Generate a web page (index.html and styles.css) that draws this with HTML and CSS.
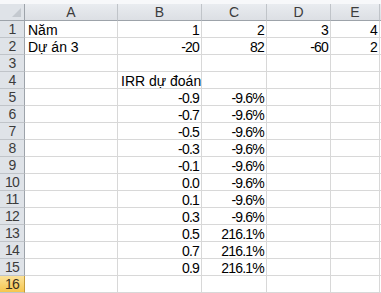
FILE: index.html
```html
<!DOCTYPE html>
<html lang="vi">
<head>
<meta charset="utf-8">
<title>Sheet1</title>
<link rel="stylesheet" href="styles.css">
</head>
<body>
<div class="toolbar-edge"></div>
<div class="sheet">
  <div class="corner"><span class="corner-tri"></span></div>
  <div class="colhead">A</div>
  <div class="colhead">B</div>
  <div class="colhead">C</div>
  <div class="colhead">D</div>
  <div class="colhead">E</div>
  <div class="colhead colhead-rest"></div>

  <div class="rowhead">1</div>
  <div class="cell">Năm</div>
  <div class="cell num">1</div>
  <div class="cell num">2</div>
  <div class="cell num">3</div>
  <div class="cell num">4</div>
  <div class="cell rest"></div>

  <div class="rowhead">2</div>
  <div class="cell">Dự án 3</div>
  <div class="cell num">-20</div>
  <div class="cell num">82</div>
  <div class="cell num">-60</div>
  <div class="cell num">2</div>
  <div class="cell rest"></div>

  <div class="rowhead">3</div>
  <div class="cell"></div><div class="cell"></div><div class="cell"></div><div class="cell"></div><div class="cell"></div><div class="cell rest"></div>

  <div class="rowhead">4</div>
  <div class="cell"></div>
  <div class="cell">IRR dự đoán</div>
  <div class="cell"></div><div class="cell"></div><div class="cell"></div><div class="cell rest"></div>

  <div class="rowhead">5</div>
  <div class="cell"></div><div class="cell num">-0.9</div><div class="cell num">-9.6%</div><div class="cell"></div><div class="cell"></div><div class="cell rest"></div>
  <div class="rowhead">6</div>
  <div class="cell"></div><div class="cell num">-0.7</div><div class="cell num">-9.6%</div><div class="cell"></div><div class="cell"></div><div class="cell rest"></div>
  <div class="rowhead">7</div>
  <div class="cell"></div><div class="cell num">-0.5</div><div class="cell num">-9.6%</div><div class="cell"></div><div class="cell"></div><div class="cell rest"></div>
  <div class="rowhead">8</div>
  <div class="cell"></div><div class="cell num">-0.3</div><div class="cell num">-9.6%</div><div class="cell"></div><div class="cell"></div><div class="cell rest"></div>
  <div class="rowhead">9</div>
  <div class="cell"></div><div class="cell num">-0.1</div><div class="cell num">-9.6%</div><div class="cell"></div><div class="cell"></div><div class="cell rest"></div>
  <div class="rowhead">10</div>
  <div class="cell"></div><div class="cell num">0.0</div><div class="cell num">-9.6%</div><div class="cell"></div><div class="cell"></div><div class="cell rest"></div>
  <div class="rowhead">11</div>
  <div class="cell"></div><div class="cell num">0.1</div><div class="cell num">-9.6%</div><div class="cell"></div><div class="cell"></div><div class="cell rest"></div>
  <div class="rowhead">12</div>
  <div class="cell"></div><div class="cell num">0.3</div><div class="cell num">-9.6%</div><div class="cell"></div><div class="cell"></div><div class="cell rest"></div>
  <div class="rowhead">13</div>
  <div class="cell"></div><div class="cell num">0.5</div><div class="cell num">216.1%</div><div class="cell"></div><div class="cell"></div><div class="cell rest"></div>
  <div class="rowhead">14</div>
  <div class="cell"></div><div class="cell num">0.7</div><div class="cell num">216.1%</div><div class="cell"></div><div class="cell"></div><div class="cell rest"></div>
  <div class="rowhead">15</div>
  <div class="cell"></div><div class="cell num">0.9</div><div class="cell num">216.1%</div><div class="cell"></div><div class="cell"></div><div class="cell rest"></div>

  <div class="rowhead rowhead-active">16</div>
  <div class="cell"></div><div class="cell"></div><div class="cell"></div><div class="cell"></div><div class="cell"></div><div class="cell rest"></div>
</div>
</body>
</html>
```

FILE: styles.css
```css
html, body {
  margin: 0;
  padding: 0;
  background: #ffffff;
  overflow: hidden;
}

body {
  font-family: "Liberation Sans", Arial, sans-serif;
  font-size: 13px;
  color: #000000;
}

/* thin strip of the formula bar above the grid */
.toolbar-edge {
  height: 4px;
  background: #f7f8fa;
}

.sheet {
  display: grid;
  grid-template-columns: 25px 93px 84px 65px 64px 49px 1fr;
  grid-auto-rows: 17px;
  width: 381px;
}

.sheet > div {
  box-sizing: border-box;
  line-height: 16px;
  white-space: nowrap;
  overflow: hidden;
}

/* select-all box */
.corner {
  position: relative;
  background: #dfe3e8;
  border-right: 1px solid #9da3aa;
  border-bottom: 1px solid #9da3aa;
}

.corner-tri {
  position: absolute;
  right: 3px;
  bottom: 3px;
  width: 0;
  height: 0;
  border-left: 9px solid transparent;
  border-bottom: 9px solid #c4c9cf;
}

.colhead {
  background: linear-gradient(#e9ecf0, #dcdfe4);
  border-right: 1px solid #c0c4c9;
  border-bottom: 1px solid #9da3aa;
  text-align: center;
  color: #3c3c3c;
  font-size: 14px;
  line-height: 16px;
}

.colhead-rest {
  border-right: none;
}

.rowhead {
  background: #dfe3e8;
  border-right: 1px solid #9da3aa;
  border-bottom: 1px solid #c0c4c9;
  text-align: center;
  color: #3c3c3c;
  font-size: 14px;
  letter-spacing: -0.8px;
}

.rowhead-active {
  background: linear-gradient(#fbe29a, #f6c64e);
  border-right: 1px solid #c29a3a;
  color: #3a3020;
}

.cell {
  border-right: 1px solid #d8d8d8;
  border-bottom: 1px solid #d8d8d8;
  padding: 1px 3px 0 3px;
  font-size: 14px;
}

.cell.rest {
  border-right: none;
}

/* numbers are set tighter, as the sheet's hinted digits are */
.num {
  text-align: right;
  letter-spacing: -0.8px;
  padding-right: 2px;
}
```
